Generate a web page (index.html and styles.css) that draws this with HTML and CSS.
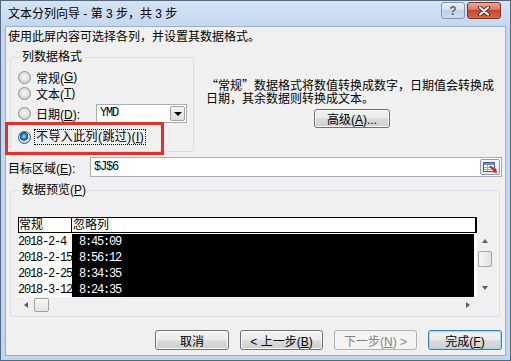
FILE: index.html
```html
<!DOCTYPE html>
<html lang="zh-CN">
<head>
    <meta charset="UTF-8">
    <title>文本分列向导</title>
    <link rel="stylesheet" href="styles.css">
</head>
<body>
    <div class="window">
        <div class="titlebar">
            <span class="title">文本分列向导 - 第 3 步，共 3 步</span>
            <div class="caption-buttons">
                <span class="cap help">?</span>
                <span class="cap close">
                    <svg width="14" height="10" viewBox="0 0 14 10">
                        <path d="M3 1.5 L11 8.5 M11 1.5 L3 8.5" stroke="#5a1c12" stroke-width="4" stroke-linecap="round"/>
                        <path d="M3 1.5 L11 8.5 M11 1.5 L3 8.5" stroke="#fff" stroke-width="2.2" stroke-linecap="round"/>
                    </svg>
                </span>
            </div>
        </div>

        <div class="client">
            <p class="intro">使用此屏内容可选择各列，并设置其数据格式。</p>

            <div class="format-row">
                <fieldset class="group format-group">
                    <legend>列数据格式</legend>
                    <div class="radio-row"><span class="radio"></span>常规(<u>G</u>)</div>
                    <div class="radio-row"><span class="radio"></span>文本(<u>T</u>)</div>
                    <div class="radio-row date-row">
                        <span class="radio"></span>
                        <span class="date-label">日期(<u>D</u>):</span>
                        <div class="select">
                            <span class="mono">YMD</span>
                            <span class="select-arrow"></span>
                        </div>
                    </div>
                    <div class="radio-row skip-row"><span class="radio checked"></span><span class="focus">不导入此列(跳过)(<u>I</u>)</span></div>
                </fieldset>
                <div class="desc">
                    <p>“常规”数据格式将数值转换成数字，日期值会转换成<br>日期，其余数据则转换成文本。</p>
                    <button class="btn advanced">高级(<u>A</u>)...</button>
                </div>
            </div>

            <div class="target-row">
                <span class="target-label">目标区域(<u>E</u>):</span>
                <div class="input">
                    <span class="mono">$J$6</span>
                    <span class="range-btn">
                        <svg width="17" height="13" viewBox="0 0 17 13">
                            <rect x="1.5" y="1.5" width="11" height="9" fill="#fff" stroke="#3f64a0"/>
                            <rect x="2" y="2" width="10" height="2" fill="#6f90c8"/>
                            <path d="M2 6.5 H12 M2 8.5 H12 M5.5 4 V10" stroke="#8fa9d4" stroke-width="1"/>
                            <path d="M8 5 L13 10" stroke="#d8261c" stroke-width="2"/>
                            <path d="M15 12 L10 11 L14 7 Z" fill="#d8261c"/>
                        </svg>
                    </span>
                </div>
            </div>

            <fieldset class="group preview">
                <legend>数据预览(<u>P</u>)</legend>
                <div class="preview-box">
                    <div class="grid-header">
                        <span class="col-general">常规</span>
                        <span class="col-skip">忽略列</span>
                    </div>
                    <div class="grid-body">
                        <div class="rows">
                            <div class="row"><span class="col-general mono">2018-2-4</span><span class="col-skip mono">8:45:09</span></div>
                            <div class="row"><span class="col-general mono">2018-2-15</span><span class="col-skip mono">8:56:12</span></div>
                            <div class="row"><span class="col-general mono">2018-2-25</span><span class="col-skip mono">8:34:35</span></div>
                            <div class="row"><span class="col-general mono">2018-3-12</span><span class="col-skip mono">8:24:35</span></div>
                        </div>
                        <div class="vscroll">
                            <span class="arrow up"></span>
                            <span class="thumb"></span>
                            <span class="arrow down"></span>
                        </div>
                    </div>
                    <div class="hscroll">
                        <span class="arrow left"></span>
                        <span class="thumb"></span>
                        <span class="arrow right"></span>
                    </div>
                </div>
            </fieldset>

            <div class="buttons">
                <button class="btn">取消</button>
                <button class="btn">&lt; 上一步(<u>B</u>)</button>
                <button class="btn" disabled>下一步(<u>N</u>) &gt;</button>
                <button class="btn default">完成(<u>F</u>)</button>
            </div>
        </div>

        <div class="annotation"></div>
    </div>
</body>
</html>
```

FILE: styles.css
```css
* {
    box-sizing: border-box;
}
body {
    margin: 0;
    font-family: "Liberation Sans", "Noto Sans CJK SC", sans-serif;
    font-size: 12px;
    color: #000;
    background: #c4d7ee;
}
.mono {
    font-family: "Liberation Mono", "Noto Sans CJK SC", monospace;
    font-size: 12px;
    letter-spacing: -1.2px;
}
.window {
    position: relative;
    width: 511px;
    height: 361px;
    border: 1px solid #56697f;
    background: linear-gradient(#d5e4f6, #c3d7ef 26px, #c1d5ed);
    padding: 0 4px 4px;
    display: flex;
    flex-direction: column;
}
.titlebar {
    height: 25px;
    display: flex;
    justify-content: space-between;
    align-items: center;
    padding: 0 5px 0 3px;
}
.title {
    line-height: 14px;
}
.caption-buttons {
    display: flex;
    gap: 2px;
    align-self: flex-start;
    margin-top: 1px;
}
.cap {
    height: 17px;
    border-radius: 3px;
    display: flex;
    align-items: center;
    justify-content: center;
}
.help {
    width: 24px;
    border: 1px solid #8397b1;
    background: linear-gradient(#eaf1f9, #d3e0ef 50%, #c2d3e8 50%, #cddcee);
    color: #55677d;
    font-weight: bold;
    font-size: 12px;
}
.close {
    width: 34px;
    border: 1px solid #7d3326;
    background: linear-gradient(#e9a89a, #d7725f 50%, #c7452d 50%, #d4664a);
}
.client {
    flex: 1;
    border: 1px solid #9bb0c9;
    background: #f0f0f0;
}
.intro {
    margin: 0;
    padding: 3px 0 0 2px;
    line-height: 14px;
    height: 16px;
}
.format-row {
    display: flex;
    align-items: flex-start;
    margin-top: 7px;
}
.group {
    margin: 0 0 0 4px;
    padding: 0;
    border: 1px solid #d5dfe5;
    border-radius: 3px;
    min-width: 0;
}
.group legend {
    padding: 0 2px;
    margin-left: 2px;
    line-height: 14px;
    height: 14px;
}
.format-group {
    width: 184px;
    padding: 5px 0 6px 7px;
}
.radio-row {
    display: flex;
    align-items: center;
    height: 16px;
}
.radio {
    flex: none;
    width: 13px;
    height: 13px;
    margin-right: 5px;
    border-radius: 50%;
    border: 1px solid #8d9195;
    background: radial-gradient(circle at 50% 45%, #fafafa 0, #e6e6e6 3px, #cfd1d3 6px);
}
.radio.checked {
    border-color: #2c628b;
    background: radial-gradient(circle at 45% 40%, #c6e7fa 0, #3c92d2 2px, #0f4f87 4px, #dfe3e6 4.5px, #cdd1d4 6px);
}
.date-row {
    height: 20px;
    margin-top: 2px;
}
.date-label {
    width: 60px;
}
.select {
    width: 91px;
    height: 19px;
    border: 1px solid #a9aeb4;
    background: #fff;
    display: flex;
    align-items: center;
    padding-left: 3px;
}
.select-arrow {
    margin-left: auto;
    width: 15px;
    height: 15px;
    margin-right: 1px;
    border: 1px solid #a3a3a3;
    border-radius: 2px;
    background: linear-gradient(#f4f4f4, #dcdcdc);
    position: relative;
}
.select-arrow::after {
    content: "";
    position: absolute;
    left: 3px;
    top: 5px;
    border-left: 4px solid transparent;
    border-right: 4px solid transparent;
    border-top: 4px solid #000;
}
.skip-row {
    margin-top: 6px;
}
.focus {
    outline: 1px dotted #000;
    line-height: 14px;
    padding: 0 1px;
    margin-left: -1px;
    letter-spacing: 0.4px;
}
.desc {
    margin-left: 12px;
}
.desc p {
    margin: 28px 0 0;
    line-height: 13px;
    white-space: nowrap;
    font-family: "Noto Sans CJK SC", sans-serif;
}
.btn {
    height: 20px;
    padding: 0;
    border: 1px solid #707070;
    border-radius: 3px;
    background: linear-gradient(#f2f2f2, #ebebeb 50%, #dddddd 50%, #cfcfcf);
    box-shadow: inset 0 0 0 1px #fbfbfb;
    font: inherit;
    color: #000;
}
.advanced {
    display: block;
    margin: 5px 0 0 108px;
    width: 76px;
    height: 19px;
}
.target-row {
    display: flex;
    align-items: center;
    height: 20px;
    margin-top: 5px;
    padding-left: 2px;
}
.target-label {
    width: 82px;
}
.input {
    width: 412px;
    height: 20px;
    border: 1px solid #a9aeb4;
    background: #fff;
    display: flex;
    align-items: center;
    padding-left: 3px;
}
.range-btn {
    margin-left: auto;
    margin-right: 1px;
    width: 20px;
    height: 16px;
    border: 1px solid #8e9fb4;
    border-radius: 2px;
    background: linear-gradient(#f6f8fb, #dde4ec);
    display: flex;
    align-items: center;
    justify-content: center;
}
.preview {
    width: 490px;
    margin-top: 6px;
    padding: 20px 0 3px 7px;
}
.preview-box {
    width: 475px;
}
.grid-header {
    display: flex;
    width: 459px;
    height: 16px;
    background: #fff;
    border: 1px solid #000;
    border-right-width: 2px;
    line-height: 14px;
}
.grid-header .col-general {
    width: 53px;
    border-right: 1px solid #000;
}
.grid-header .col-skip {
    padding-left: 1px;
}
.grid-body {
    display: flex;
    height: 64px;
}
.rows {
    width: 459px;
    padding-top: 1px;
    background: #fff;
    overflow: hidden;
}
.row {
    display: flex;
    height: 16px;
    line-height: 17px;
}
.row .col-general {
    width: 54px;
    white-space: nowrap;
    overflow: hidden;
}
.row .col-skip {
    width: 402px;
    background: #000;
    color: #fff;
    padding-left: 7px;
}
.vscroll {
    width: 16px;
    display: flex;
    flex-direction: column;
    align-items: center;
    padding: 6px 0 7px;
}
.vscroll .thumb {
    width: 14px;
    height: 16px;
    margin: 8px 0 auto;
}
.thumb {
    border: 1px solid #a4a4a4;
    border-radius: 2px;
    background: linear-gradient(90deg, #f7f7f7, #e2e2e2);
}
.hscroll {
    width: 459px;
    height: 16px;
    display: flex;
    align-items: center;
    padding: 0 7px 0 6px;
}
.hscroll .thumb {
    width: 15px;
    height: 14px;
    margin: 0 auto 0 6px;
    background: linear-gradient(#f7f7f7, #e2e2e2);
}
.arrow {
    width: 0;
    height: 0;
    border: 3px solid transparent;
}
.arrow.up {
    border-bottom: 4px solid #5e5e5e;
    border-top-width: 0;
}
.arrow.down {
    border-top: 4px solid #5e5e5e;
    border-bottom-width: 0;
}
.arrow.left {
    border-right: 4px solid #5e5e5e;
    border-left-width: 0;
}
.arrow.right {
    border-left: 4px solid #5e5e5e;
    border-right-width: 0;
}
.buttons {
    display: flex;
    justify-content: flex-end;
    gap: 11px;
    margin-top: 13px;
    padding-right: 3px;
}
.buttons .btn {
    width: 83px;
}
.buttons .btn:first-child,
.buttons .btn.default {
    width: 74px;
}
.btn:disabled {
    border-color: #adb2b5;
    background: #f4f4f4;
    box-shadow: none;
    color: #838383;
}
.btn.default {
    border-color: #3c7fb1;
    box-shadow: inset 0 0 0 1px #9fd9f7;
}
.annotation {
    position: absolute;
    left: 4px;
    top: 121px;
    width: 159px;
    height: 33px;
    border: 3px solid #e2302b;
}
```
